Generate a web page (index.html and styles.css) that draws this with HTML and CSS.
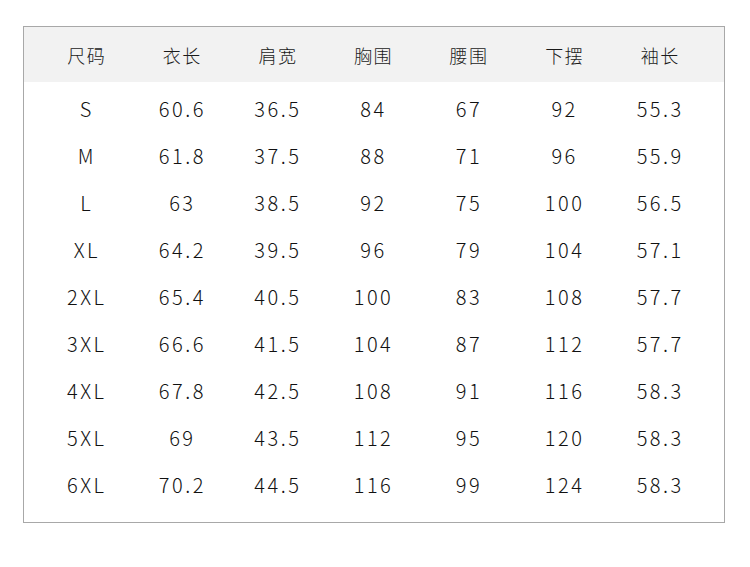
FILE: index.html
```html
<!DOCTYPE html>
<html lang="zh">
<head>
<meta charset="utf-8">
<link rel="stylesheet" href="styles.css">
</head>
<body>
<div class="sheet">
  <div class="table">
    <div class="row head">
      <span>尺码</span><span>衣长</span><span>肩宽</span><span>胸围</span><span>腰围</span><span>下摆</span><span>袖长</span>
    </div>
    <div class="body">
      <div class="row"><span>S</span><span>60.6</span><span>36.5</span><span>84</span><span>67</span><span>92</span><span>55.3</span></div>
      <div class="row"><span>M</span><span>61.8</span><span>37.5</span><span>88</span><span>71</span><span>96</span><span>55.9</span></div>
      <div class="row"><span>L</span><span>63</span><span>38.5</span><span>92</span><span>75</span><span>100</span><span>56.5</span></div>
      <div class="row"><span>XL</span><span>64.2</span><span>39.5</span><span>96</span><span>79</span><span>104</span><span>57.1</span></div>
      <div class="row"><span>2XL</span><span>65.4</span><span>40.5</span><span>100</span><span>83</span><span>108</span><span>57.7</span></div>
      <div class="row"><span>3XL</span><span>66.6</span><span>41.5</span><span>104</span><span>87</span><span>112</span><span>57.7</span></div>
      <div class="row"><span>4XL</span><span>67.8</span><span>42.5</span><span>108</span><span>91</span><span>116</span><span>58.3</span></div>
      <div class="row"><span>5XL</span><span>69</span><span>43.5</span><span>112</span><span>95</span><span>120</span><span>58.3</span></div>
      <div class="row"><span>6XL</span><span>70.2</span><span>44.5</span><span>116</span><span>99</span><span>124</span><span>58.3</span></div>
    </div>
  </div>
</div>
</body>
</html>
```
FILE: styles.css
```css
html, body {
  margin: 0;
  padding: 0;
  background: #ffffff;
}
body {
  font-family: "Noto Sans CJK SC", "Noto Sans", sans-serif;
  font-weight: 300;
  color: #111111;
}
.sheet {
  padding: 26px 0 0 23px;
}
.table {
  width: 700px;
  height: 495px;
  border: 1px solid #a8a8a8;
}
.row {
  display: grid;
  grid-template-columns: repeat(7, 1fr);
  padding: 0 16px 0 15px;
  height: 47px;
  align-items: center;
  text-align: center;
  font-size: 20px;
  letter-spacing: 2.5px;
}
.row.head {
  height: 55px;
  background: #f2f2f2;
  font-size: 18px;
  letter-spacing: 1.5px;
  color: #1a1a1a;
}
.body {
  padding-top: 3px;
}
```
